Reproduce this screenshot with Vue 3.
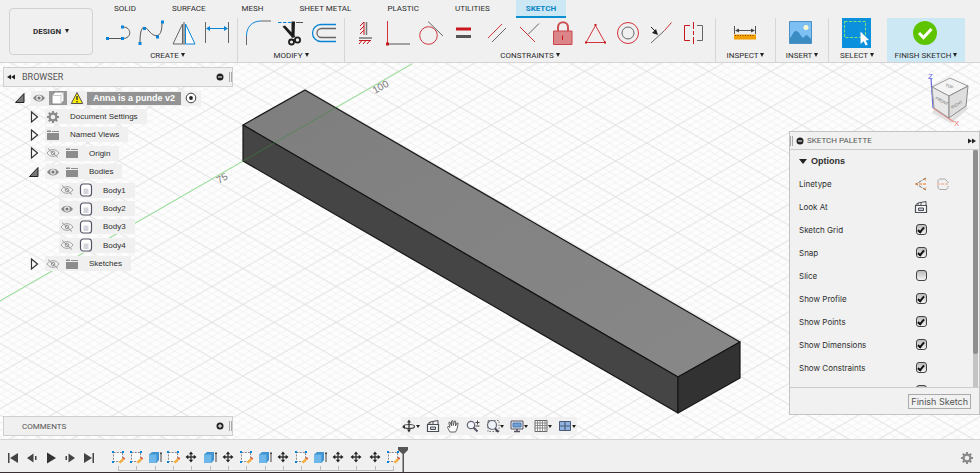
<script setup>
import { ref } from 'vue'

const tabs = ['SOLID', 'SURFACE', 'MESH', 'SHEET METAL', 'PLASTIC', 'UTILITIES', 'SKETCH']
const activeTab = ref('SKETCH')

const groups = [
  { label: 'CREATE', tools: ['line', 'spline', 'mirror', 'dimension'] },
  { label: 'MODIFY', tools: ['fillet', 'trim', 'offset'] },
  {
    label: 'CONSTRAINTS',
    tools: ['horizontal', 'coincident', 'tangent', 'equal', 'parallel', 'perpendicular', 'fix', 'midpoint', 'concentric', 'collinear', 'symmetry'],
  },
  { label: 'INSPECT', tools: ['inspect'] },
  { label: 'INSERT', tools: ['insert'] },
  { label: 'SELECT', tools: ['select'] },
]

const tree = [
  { label: 'Document Settings', icons: ['gear'], depth: 1, open: false },
  { label: 'Named Views', icons: ['folder'], depth: 1, open: false },
  { label: 'Origin', icons: ['eyeoff', 'folder'], depth: 1, open: false },
  { label: 'Bodies', icons: ['eye', 'folder'], depth: 1, open: true },
  { label: 'Body1', icons: ['eyeoff', 'body'], depth: 2 },
  { label: 'Body2', icons: ['eye', 'body'], depth: 2 },
  { label: 'Body3', icons: ['eyeoff', 'body'], depth: 2 },
  { label: 'Body4', icons: ['eyeoff', 'body'], depth: 2 },
  { label: 'Sketches', icons: ['eyeoff', 'folder'], depth: 1, open: false },
]

const options = ref([
  { label: 'Sketch Grid', on: true },
  { label: 'Snap', on: true },
  { label: 'Slice', on: false },
  { label: 'Show Profile', on: true },
  { label: 'Show Points', on: true },
  { label: 'Show Dimensions', on: true },
  { label: 'Show Constraints', on: true },
])
const projected = ref(true)

const navTools = [
  { name: 'orbit', menu: true },
  { name: 'lookat' },
  { name: 'pan' },
  { name: 'zoom' },
  { name: 'zoomwindow', menu: true },
  { name: 'display', menu: true },
  { name: 'grid', menu: true },
  { name: 'viewports', menu: true },
]

const playback = ['first', 'back', 'play', 'forward', 'last']
const features = ['sketch', 'sketch', 'extrude', 'sketch', 'move', 'extrude', 'move', 'sketch', 'extrude', 'move', 'sketch', 'extrude', 'move', 'move', 'move', 'sketch']
</script>

<template>
  <div class="app">
    <svg class="defs" aria-hidden="true">
      <!-- Sketch tools, 30 x 30 -->
      <symbol id="t-line" viewBox="0 0 30 30">
        <path d="M4 20.500H20C29 20.500 29 9 20 9" fill="none" stroke="#555" stroke-width="1" />
        <path d="M3 19h3v3H3zM18 19h3v3h-3zM18 7.500h3v3h-3z" fill="#0a84d6" />
      </symbol>
      <symbol id="t-spline" viewBox="0 0 30 30">
        <path d="M4 25C4 5 9 8 13 13S26 23 26 5" fill="none" stroke="#555" />
        <path d="M2.500 24h3v3h-3zM7 9h3v3H7zM20 17.500h3v3h-3zM25 2.500h3v3h-3z" fill="#0a84d6" />
      </symbol>
      <symbol id="t-mirror" viewBox="0 0 30 30">
        <path d="M13.500 6L4 26h9.500z" fill="none" stroke="#666" />
        <path d="M16.500 6L26 26h-9.500z" fill="#fff" stroke="#0a84d6" />
        <path d="M15 4v23" stroke="#555" />
      </symbol>
      <symbol id="t-dimension" viewBox="0 0 30 30">
        <path d="M3.500 4v21M26.500 4v21" stroke="#666" />
        <path d="M5 10.500h20" stroke="#0a84d6" />
        <path d="M4 10.500l4-2.500v5zM26 10.500L22 8v5z" fill="#0a84d6" />
      </symbol>
      <symbol id="t-fillet" viewBox="0 0 30 30">
        <path d="M3.500 18C3.500 9 9 3 18 3" fill="none" stroke="#0a84d6" />
        <path d="M3.500 18v9M18 3h10" stroke="#666" />
      </symbol>
      <symbol id="t-trim" viewBox="0 0 30 30">
        <path d="M2 4.500h13" stroke="#0a84d6" stroke-dasharray="3.500 1.500" />
        <path d="M20 4.500h7" stroke="#555" />
        <path d="M6.500 8.500L9 7.500 19.500 18.500 16.500 20zM15.500 3.500h3.500l-.5 16h-3z" fill="#1c1c1c" />
        <circle cx="15.500" cy="24" r="2.500" fill="none" stroke="#1c1c1c" stroke-width="1.800" />
        <circle cx="21.500" cy="22" r="2.600" fill="none" stroke="#1c1c1c" stroke-width="1.800" />
      </symbol>
      <symbol id="t-offset" viewBox="0 0 30 30">
        <path d="M27 6.500H12A8.500 8.500 0 0 0 12 23.500H27" fill="none" stroke="#0a84d6" stroke-width="1.300" />
        <path d="M27 10.500H12.500A4.500 4.500 0 0 0 12.500 19.500H27" fill="none" stroke="#666" stroke-width="1.300" />
      </symbol>
      <symbol id="t-horizontal" viewBox="0 0 30 30">
        <path d="M16.500 4v13M9 20h13" stroke="#777" stroke-width="1.500" />
        <path d="M14 4v13M10 8l4-4M10 12l4-4M10 16l4-4M9 22.500h12M9 26l3-3.500M13 26l3-3.500M17 26l3-3.500" stroke="#c8181e" fill="none" />
      </symbol>
      <symbol id="t-coincident" viewBox="0 0 30 30">
        <path d="M4.500 3v23" stroke="#d0353a" />
        <path d="M5 26h22" stroke="#777" stroke-width="1.300" />
        <path d="M3 24.500h3v3H3z" fill="#c8181e" />
      </symbol>
      <symbol id="t-tangent" viewBox="0 0 30 30">
        <circle cx="12.500" cy="17.500" r="8.800" fill="none" stroke="#d0353a" />
        <path d="M12 3.500L27 18" stroke="#666" />
      </symbol>
      <symbol id="t-equal" viewBox="0 0 30 30">
        <path d="M7 9.500h15v3H7z" fill="#c8181e" />
        <path d="M7 17h15v3H7z" fill="#555" />
      </symbol>
      <symbol id="t-parallel" viewBox="0 0 30 30">
        <path d="M6 20L20 6" stroke="#d0353a" />
        <path d="M10 24L24 10" stroke="#666" />
      </symbol>
      <symbol id="t-perpendicular" viewBox="0 0 30 30">
        <path d="M5 9l15 15" stroke="#d0353a" />
        <path d="M13 16.500L24 5.500" stroke="#666" />
      </symbol>
      <symbol id="t-fix" viewBox="0 0 30 30">
        <path d="M10 13V9.500C10 2.500 20 2.500 20 9.500V13" fill="none" stroke="#cc5055" stroke-width="2" />
        <path d="M5.500 13h18.500v13.500H5.500z" fill="#dc8588" stroke="#c9474c" />
        <path d="M14.500 17.500v4.500" stroke="#c8181e" />
      </symbol>
      <symbol id="t-midpoint" viewBox="0 0 30 30">
        <path d="M14.500 7.500l9.500 17H5z" fill="none" stroke="#d0353a" />
        <path d="M13.500 6h2v2h-2zM4 23.500h2v2H4zM23 23.500h2v2h-2z" fill="#c8181e" />
      </symbol>
      <symbol id="t-concentric" viewBox="0 0 30 30">
        <circle cx="14" cy="15" r="10.500" fill="none" stroke="#d0353a" />
        <circle cx="14" cy="15" r="6" fill="none" stroke="#666" />
      </symbol>
      <symbol id="t-collinear" viewBox="0 0 30 30">
        <path d="M4 25l13.500-12.500" stroke="#666" />
        <path d="M17.500 12.500l7-8" stroke="#d0353a" />
        <path d="M4 9l4 4" stroke="#222" />
        <path d="M11 17l-6-2 4-4z" fill="#222" />
      </symbol>
      <symbol id="t-symmetry" viewBox="0 0 30 30">
        <path d="M10 7.500H4.500v15H10" fill="none" stroke="#c8181e" />
        <path d="M13.500 4v7M13.500 13v4M13.500 19v7" stroke="#c8181e" />
        <path d="M17 7.500h5.500v15H17" fill="none" stroke="#666" />
      </symbol>
      <symbol id="t-inspect" viewBox="0 0 30 30">
        <path d="M3.500 8v8M24.500 8v8M5 12.500h18" stroke="#555" />
        <path d="M4 12.500l4-2v4zM24 12.500l-4-2v4z" fill="#444" />
        <path d="M3 16.500h22v5H3z" fill="#f5a000" />
        <path d="M4 17.500h20" stroke="#6b4a00" stroke-dasharray="1 1.500" />
      </symbol>
      <symbol id="t-insert" viewBox="0 0 30 30">
        <path d="M2.500 3.500h22v22h-22z" fill="#7cc0f4" stroke="#4a90c4" />
        <circle cx="19" cy="9.500" r="2.500" fill="#fffbd0" />
        <path d="M3 20c3-3 3-7 6-7s4 4 7 7c2-3 4-4 6-1l2 2v4H3z" fill="#3c8cc4" />
      </symbol>
      <symbol id="t-select" viewBox="0 0 30 30">
        <path d="M0 0h29v30H0z" fill="#0a90dc" />
        <path d="M2.500 3.500h21v16h-21z" fill="none" stroke="#7fe07f" stroke-dasharray="3 1.500" />
        <path d="M18.500 13.500l8.500 8.500-3.400.4 2.200 4.200-2.200 1-2-4.300-3 2.700z" fill="#fff" />
      </symbol>
      <symbol id="t-finish" viewBox="0 0 30 30">
        <circle cx="14" cy="15" r="12" fill="#5fc400" />
        <path d="M8 15l4.500 4.500L20.500 11" fill="none" stroke="#fff" stroke-width="3" />
      </symbol>

      <!-- Tree icons, 14 x 14 -->
      <symbol id="i-eye" viewBox="0 0 14 14">
        <path d="M1 7C4 2.500 10 2.500 13 7C10 11.500 4 11.500 1 7z" fill="#888" />
        <circle cx="7" cy="7" r="2.800" fill="#eee" />
        <circle cx="7" cy="7" r="1.600" fill="#777" />
      </symbol>
      <symbol id="i-eyeoff" viewBox="0 0 14 14">
        <path d="M1 7C4 2.500 10 2.500 13 7C10 11.500 4 11.500 1 7z" fill="none" stroke="#999" stroke-width=".9" />
        <circle cx="7" cy="7" r="1.800" fill="none" stroke="#999" />
        <path d="M2 2.500l10 9" stroke="#999" />
      </symbol>
      <symbol id="i-folder" viewBox="0 0 14 14">
        <path d="M1 5h12v7H1zM1 4V2.500h4V4zM6 4V3h7v1z" fill="#8c8c8c" />
      </symbol>
      <symbol id="i-gear" viewBox="0 0 14 14">
        <circle cx="7" cy="7" r="3.400" fill="none" stroke="#8a8a8a" stroke-width="2.200" />
        <path d="M7 1v2.500M7 10.500V13M1 7h2.500M10.500 7H13M2.800 2.800l1.700 1.700M9.500 9.500l1.700 1.700M11.200 2.800L9.500 4.500M4.500 9.500l-1.700 1.700" stroke="#8a8a8a" stroke-width="2" />
      </symbol>
      <symbol id="i-body" viewBox="0 0 14 14">
        <rect x="1.500" y="1" width="11" height="12" rx="2.800" fill="#fff" stroke="#556" stroke-width="1.200" />
        <path d="M4.500 5.500h5V11h-5z" fill="#d4d4dc" />
      </symbol>
      <symbol id="i-cube" viewBox="0 0 14 14">
        <path d="M1 4.500L4 1h9v8.500L10 13H1z" fill="#fff" stroke="#888" />
        <path d="M1.500 4.500H10V13M10 4.500L13 1" fill="none" stroke="#bbb" stroke-width=".8" />
      </symbol>
      <symbol id="i-warning" viewBox="0 0 14 14">
        <path d="M7 1.500l5.700 11H1.300z" fill="#ffee00" stroke="#555" stroke-linejoin="round" />
        <path d="M7 5v4M7 10v1.500" stroke="#333" stroke-width="1.400" />
      </symbol>
      <symbol id="i-closed" viewBox="0 0 14 14">
        <path d="M4.500 2l6 5-6 5z" fill="#fff" stroke="#333" stroke-width="1.200" />
      </symbol>
      <symbol id="i-open" viewBox="0 0 14 14">
        <path d="M11 2.500v9H2.500z" fill="#777" stroke="#222" />
      </symbol>
      <symbol id="i-target" viewBox="0 0 14 14">
        <circle cx="7" cy="7" r="4.800" fill="#fff" stroke="#444" />
        <circle cx="7" cy="7" r="1.900" fill="#222" />
      </symbol>
      <symbol id="i-minus" viewBox="0 0 14 14">
        <circle cx="7" cy="7" r="3.500" fill="#222" />
        <path d="M5 7h4" stroke="#fff" />
      </symbol>
      <symbol id="i-plus" viewBox="0 0 14 14">
        <circle cx="7" cy="7" r="3.500" fill="#222" />
        <path d="M5 7h4M7 5v4" stroke="#fff" />
      </symbol>
      <symbol id="i-rewind" viewBox="0 0 14 14">
        <path d="M7 4.500v5L3 7zM11 4.500v5L7 7z" fill="#222" />
      </symbol>
      <symbol id="i-fast" viewBox="0 0 14 14">
        <path d="M3 4.500v5L7 7zM7 4.500v5L11 7z" fill="#222" />
      </symbol>

      <!-- Palette and navigation icons, 14 x 14 -->
      <symbol id="i-construction" viewBox="0 0 14 14">
        <path d="M12 1L2 7l10 6" fill="none" stroke="#777" stroke-dasharray="4 1" />
        <path d="M1 7h12M10 1l2 3M10 13l2-3" stroke="#f07020" stroke-dasharray="3 1" />
      </symbol>
      <symbol id="i-centerline" viewBox="0 0 14 14">
        <path d="M2 6V3.500L3.500 2H9l3 3v1M12 9v1.500L10.500 12.500H3.500L2 11V8" fill="none" stroke="#aaa" />
        <path d="M1 7h12" stroke="#f0a080" stroke-dasharray="3 1" />
      </symbol>
      <symbol id="n-lookat" viewBox="0 0 14 14">
        <path d="M1.500 5.500h11v7h-11z" fill="#f8f8f8" stroke="#4a4f55" stroke-width="1.200" />
        <path d="M1.500 5L4 3l8-1.500V5M4 3v2M7 2.500V5" fill="none" stroke="#4a4f55" />
        <path d="M4.500 8h5v2.500h-5z" fill="#ccd" stroke="#4a4f55" />
      </symbol>
      <symbol id="n-orbit" viewBox="0 0 14 14">
        <ellipse cx="7" cy="7.500" rx="5.500" ry="2" fill="none" stroke="#444" stroke-width="1.200" />
        <path d="M7 2v10" stroke="#333" stroke-width="1.300" />
        <path d="M7 .5l2 3H5zM7 13.500l2-3H5zM0 8l3-2v4z" fill="#333" />
      </symbol>
      <symbol id="n-pan" viewBox="0 0 14 14">
        <path d="M4 13L1.500 8.500 2 7.300 4 8.500 2.800 3.500 4 3l1.500 4V2l1.300-.5.5 5L8.500 2l1.200.2L9.500 7l1.500-3 1.200.3L11 10l-1.500 3z" fill="#fff" stroke="#555" stroke-width=".9" />
      </symbol>
      <symbol id="n-zoom" viewBox="0 0 14 14">
        <circle cx="5" cy="6" r="3.700" fill="#f4f7fa" stroke="#667" stroke-width="1.200" />
        <path d="M7.500 8.500l4 4" stroke="#556" stroke-width="2" />
        <path d="M9.500 3.500h4M11.500 1.500v4M9.500 7h4" stroke="#444" />
      </symbol>
      <symbol id="n-zoomwindow" viewBox="0 0 14 14">
        <path d="M2 1.500h11v11H2z" fill="none" stroke="#777" stroke-dasharray="1.500 1.500" />
        <circle cx="6" cy="6" r="4.500" fill="#eef3f7" stroke="#667" stroke-width="1.200" />
        <path d="M9 9.500l3.500 3.500" stroke="#445" stroke-width="2" />
      </symbol>
      <symbol id="n-display" viewBox="0 0 14 14">
        <path d="M1 2h12v8H1z" fill="#e4e8ee" stroke="#556" />
        <path d="M3 4h8v4H3z" fill="#6fa0d8" stroke="#4a78b0" />
        <path d="M4 12.500h6M7 10v2" stroke="#556" stroke-width="1.500" />
      </symbol>
      <symbol id="n-grid" viewBox="0 0 14 14">
        <path d="M1 1.500h12v11H1z" fill="#fff" stroke="#666" />
        <path d="M1 4h12M1 6.500h12M1 9h12M3.500 1v12M6 1v12M8.500 1v12M11 1v12" stroke="#777" stroke-width=".8" />
      </symbol>
      <symbol id="n-viewports" viewBox="0 0 14 14">
        <path d="M1.500 2.500h11v9h-11z" fill="#8fb4e0" stroke="#4a5a78" />
        <path d="M7 2v10M1 7h12" stroke="#4a5a78" stroke-width="1.200" />
      </symbol>

      <!-- Timeline icons, 14 x 14 -->
      <symbol id="p-first" viewBox="0 0 14 14"><path d="M2 2h1.500v10H2zM12 2v10L4 7z" fill="#444" /></symbol>
      <symbol id="p-back" viewBox="0 0 14 14"><path d="M8.500 2.500v9L2 7zM10 5h1.500v4H10z" fill="#444" /></symbol>
      <symbol id="p-play" viewBox="0 0 14 14"><path d="M3 1.500L12 7l-9 5.500z" fill="#333" /></symbol>
      <symbol id="p-forward" viewBox="0 0 14 14"><path d="M5.500 2.500v9L12 7zM2.500 5H4v4H2.500z" fill="#444" /></symbol>
      <symbol id="p-last" viewBox="0 0 14 14"><path d="M10.500 2H12v10h-1.500zM2 2v10l8-5z" fill="#444" /></symbol>
      <symbol id="f-sketch" viewBox="0 0 14 14">
        <path d="M2.500 2.500h9v9h-9z" fill="#fafafa" stroke="#888" stroke-dasharray="2 1.200" />
        <path d="M1 1h2v2H1zM11 1h2v2h-2zM1 11h2v2H1z" fill="#0a84d6" />
        <path d="M7.500 12l4-4 2 1.500-4 4z" fill="#f5b041" />
        <path d="M11.500 8l1-1 1.700 1.500-.9 1z" fill="#e04030" />
      </symbol>
      <symbol id="f-extrude" viewBox="0 0 14 14">
        <path d="M1 4.500L4 2h7v8l-2.500 3H1z" fill="#3f93d0" />
        <path d="M1 4.500h7.500V13H1z" fill="#6db6ea" />
        <path d="M13 2v10M12 3.500h2" stroke="#444" />
      </symbol>
      <symbol id="f-move" viewBox="0 0 14 14">
        <path d="M7 3v8M3 7h8" stroke="#333" stroke-width="1.300" />
        <path d="M7 1.500l2.200 2.800H4.800zM7 12.500l2.200-2.800H4.800zM1.500 7l2.800-2.200v4.400zM12.500 7L9.700 4.800v4.400z" fill="#222" />
      </symbol>
    </svg>

    <header class="toolbar">
      <button class="workspace">DESIGN <i class="caret"></i></button>
      <div class="ribbon">
        <nav class="tabs">
          <button v-for="t in tabs" :key="t" class="tab" :class="{ active: t === activeTab }" @click="activeTab = t">{{ t }}</button>
        </nav>
        <div class="groups">
          <section v-for="g in groups" :key="g.label" class="group" :class="'g-' + g.label.toLowerCase()">
            <div class="tools">
              <button v-for="t in g.tools" :key="t" class="tool" :aria-label="t">
                <svg><use :href="'#t-' + t" /></svg>
              </button>
            </div>
            <button class="group-label">{{ g.label }} <i class="caret"></i></button>
          </section>
          <section class="group finish">
            <div class="tools">
              <button class="tool" aria-label="finish"><svg><use href="#t-finish" /></svg></button>
            </div>
            <button class="group-label">FINISH SKETCH <i class="caret"></i></button>
          </section>
        </div>
      </div>
    </header>

    <main class="viewport">
      <svg class="scene" aria-label="Model view">
        <defs>
          <pattern id="minor" width="12.420" height="7.170" patternUnits="userSpaceOnUse" x="243" y="98">
            <path d="M0 0L12.420 7.170M12.420 0L0 7.170" stroke="#efeff0" stroke-width=".8" />
          </pattern>
          <pattern id="major" width="62.100" height="35.850" patternUnits="userSpaceOnUse" x="243" y="98">
            <path d="M0 0L62.100 35.850M62.100 0L0 35.850" stroke="#e1e1e3" stroke-width=".9" />
          </pattern>
          <linearGradient id="top" x1="0" y1="0" x2="1" y2="1">
            <stop offset="0" stop-color="#7e7e7e" />
            <stop offset="1" stop-color="#888" />
          </linearGradient>
        </defs>
        <rect width="100%" height="100%" fill="url(#minor)" />
        <rect width="100%" height="100%" fill="url(#major)" />
        <path d="M-2 239L412 1" stroke="#8ee08e" />
        <text class="axis" transform="translate(375 31) rotate(-30)">100</text>
        <text class="axis" transform="translate(219 121) rotate(-30)">75</text>
        <g stroke="#161616" stroke-width="1.200" stroke-linejoin="round">
          <path d="M243 62L305 27 740 279 678 314z" fill="url(#top)" />
          <path d="M243 62L678 314V350L243 98z" fill="#454545" />
          <path d="M678 314L740 279V315L678 350z" fill="#323232" />
        </g>
        <path d="M243 98L337 44" stroke="#3f8a3f" stroke-width=".8" opacity=".7" />
      </svg>

      <svg class="viewcube" viewBox="0 0 48 62" aria-label="View cube">
        <path d="M10 46L28 56L44 42" fill="none" stroke="#e0e0e0" stroke-width="4" />
        <path d="M8 13L10 43" stroke="#6666dd" stroke-width="1.200" />
        <path d="M10 43L31 57" stroke="#ee8888" stroke-width="1.200" />
        <path d="M9 22L27 13 45 21 26 31z" fill="#f4f4f4" stroke="#999" />
        <path d="M9 22L26 31V53L11 43z" fill="#e8e8e8" stroke="#999" />
        <path d="M45 21L26 31V53L43 41z" fill="#dedede" stroke="#888" />
        <text class="face" transform="translate(22 21) rotate(20)">TOP</text>
        <text class="face" transform="translate(12 34) rotate(28)">FRONT</text>
        <text class="face" transform="translate(29 44) rotate(-30)">RIGHT</text>
        <text class="axis-z" x="5" y="14">Z</text>
        <text class="axis-x" x="31" y="61">X</text>
      </svg>

      <aside class="browser">
        <div class="bar">
          <svg class="ico"><use href="#i-rewind" /></svg>
          <h2 class="wide">BROWSER</h2>
          <button class="icon-btn" aria-label="Collapse"><svg class="ico"><use href="#i-minus" /></svg></button>
          <i class="grip"></i>
        </div>
        <ul class="tree">
          <li class="row root">
            <svg class="ico"><use href="#i-open" /></svg>
            <div class="node">
              <svg class="ico"><use href="#i-eye" /></svg>
              <span class="cube"><svg class="ico"><use href="#i-cube" /></svg></span>
              <svg class="ico"><use href="#i-warning" /></svg>
              <strong class="doc">Anna is a punde v2</strong>
              <svg class="ico"><use href="#i-target" /></svg>
            </div>
          </li>
          <li v-for="n in tree" :key="n.label" class="row" :class="'depth' + n.depth">
            <svg v-if="n.depth === 1" class="ico"><use :href="n.open ? '#i-open' : '#i-closed'" /></svg>
            <div class="node">
              <svg v-for="i in n.icons" :key="i" class="ico"><use :href="'#i-' + i" /></svg>
              <span class="name">{{ n.label }}</span>
            </div>
          </li>
        </ul>
      </aside>

      <aside class="comments bar">
        <h2>COMMENTS</h2>
        <button class="icon-btn" aria-label="Add comment"><svg class="ico"><use href="#i-plus" /></svg></button>
        <i class="grip"></i>
      </aside>

      <aside class="palette">
        <div class="palette-head">
          <i class="grip"></i>
          <svg class="ico"><use href="#i-minus" /></svg>
          <h2>SKETCH PALETTE</h2>
          <svg class="ico"><use href="#i-fast" /></svg>
        </div>
        <div class="palette-body">
          <div class="fields">
            <h3><i class="caret big"></i>Options</h3>
            <div class="field">
              <span>Linetype</span>
              <button class="icon-btn" aria-label="Construction"><svg class="ico"><use href="#i-construction" /></svg></button>
              <button class="icon-btn" aria-label="Centerline"><svg class="ico"><use href="#i-centerline" /></svg></button>
            </div>
            <div class="field">
              <span>Look At</span>
              <button class="icon-btn" aria-label="Look At"><svg class="ico"><use href="#n-lookat" /></svg></button>
            </div>
            <label v-for="o in options" :key="o.label" class="field">
              <span>{{ o.label }}</span>
              <input v-model="o.on" type="checkbox" />
            </label>
            <div class="field">
              <span></span>
              <input v-model="projected" type="checkbox" aria-label="Show Projected Geometries" />
            </div>
          </div>
          <div class="track"><div class="thumb"></div></div>
        </div>
        <div class="palette-foot"><button class="done">Finish Sketch</button></div>
      </aside>

      <nav class="navbar">
        <button v-for="n in navTools" :key="n.name" class="nav-btn" :aria-label="n.name">
          <svg class="ico"><use :href="'#n-' + n.name" /></svg>
          <i v-if="n.menu" class="caret"></i>
        </button>
      </nav>
    </main>

    <footer class="timeline">
      <div class="playback">
        <button v-for="p in playback" :key="p" class="icon-btn" :aria-label="p"><svg class="ico"><use :href="'#p-' + p" /></svg></button>
      </div>
      <ol class="features">
        <li v-for="(f, i) in features" :key="i"><svg class="ico"><use :href="'#f-' + f" /></svg></li>
      </ol>
      <svg class="marker" viewBox="0 0 12 26"><path d="M1 1h10v3L7 8v18H5.500V8L1 4z" fill="#555" /></svg>
      <button class="icon-btn settings" aria-label="Settings"><svg class="ico"><use href="#i-gear" /></svg></button>
    </footer>
  </div>
</template>

<style>
body {
  margin: 0;
}
</style>

<style scoped>
.app {
  display: flex;
  flex-direction: column;
  height: 100vh;
  min-height: 440px;
  box-sizing: border-box;
  border-bottom: 1px solid #3a3032;
  background: #fdfdfd;
  color: #2e2e2e;
  font: 8px "Liberation Sans", Arial, sans-serif;
  overflow: hidden;
}
.defs {
  display: none;
}
button {
  margin: 0;
  padding: 0;
  border: 0;
  background: none;
  color: inherit;
  font: inherit;
}
h2,
h3,
ul,
ol {
  margin: 0;
  padding: 0;
  list-style: none;
}
.ico {
  display: block;
  flex: none;
  width: 14px;
  height: 14px;
}
.caret {
  display: inline-block;
  border: 2px solid transparent;
  border-top: 4px solid #222;
  border-bottom: 0;
  vertical-align: 1px;
}
.grip {
  width: 1px;
  height: 10px;
  border: 1px solid #aaa;
  border-width: 0 1px;
}

/* Toolbar */
.toolbar {
  display: flex;
  flex: none;
  height: 63px;
  box-sizing: border-box;
  border-bottom: 1px solid #d4d4d4;
  background: #f0f0f0;
  font-family: Roboto, sans-serif;
}
.workspace {
  width: 84px;
  height: 47px;
  margin: 8px 5px 0 9px;
  box-sizing: border-box;
  border: 1px solid #d2d2d2;
  border-radius: 4px;
  font-weight: 700;
  flex: none;
}
.workspace .caret {
  margin-left: 2px;
}
.ribbon {
  flex: 1;
}
.tabs {
  display: flex;
  gap: 16px;
  height: 18px;
  padding-left: 6px;
}
.tab {
  padding: 0 10px;
  border-bottom: 2px solid transparent;
  white-space: nowrap;
}
.tab.active {
  border-color: #0a90d0;
  background: #cde8f5;
  color: #0a84c4;
  font-weight: 700;
}
.groups {
  display: flex;
  height: 44px;
}
.group {
  display: flex;
  flex-direction: column;
  align-items: center;
  box-sizing: border-box;
  padding: 0 5px;
  border-right: 1px solid #d6d6d6;
}
.tools {
  display: flex;
  gap: 3px;
}
.tool,
.tool svg {
  display: block;
  width: 30px;
  height: 30px;
}
.group-label {
  height: 14px;
  white-space: nowrap;
}
.g-inspect {
  width: 60px;
}
.g-insert {
  width: 53px;
}
.g-select {
  width: 56px;
  border: 0;
}
.finish {
  width: 78px;
  margin-left: 2px;
  border: 0;
  background: #cde8f5;
}

/* Viewport */
.viewport {
  position: relative;
  flex: 1;
  overflow: hidden;
}
.scene {
  position: absolute;
  inset: 0;
  width: 100%;
  height: 100%;
}
.axis {
  fill: #777;
  font-size: 10px;
}
.viewcube {
  position: absolute;
  top: 2px;
  right: 9px;
  width: 48px;
  height: 62px;
}
.face {
  fill: #666;
  font-size: 4px;
}
.axis-z {
  fill: #6666dd;
  font-size: 8px;
}
.axis-x {
  fill: #ee7777;
  font-size: 8px;
}

.bar {
  display: flex;
  align-items: center;
  width: 230px;
  height: 20px;
  box-sizing: border-box;
  border: 1px solid #cfcfcf;
  background: #f0f0f0;
}
h2 {
  flex: 1;
  color: #555;
  font: 8px Roboto, sans-serif;
}
h2.wide {
  font-size: 9px;
}
.browser {
  position: absolute;
  top: 4px;
  left: 3px;
}
.browser h2 {
  margin-left: 4px;
}
.comments {
  position: absolute;
  bottom: 3px;
  left: 3px;
  padding-left: 18px;
}
.bar .icon-btn {
  margin-right: 2px;
}
.tree {
  display: grid;
  grid-auto-rows: 1fr;
  height: 184px;
  padding-top: 2px;
}
.row {
  display: flex;
  align-items: center;
  gap: 4px;
  padding-left: 24px;
}
.root {
  padding-left: 10px;
}
.depth2 {
  padding-left: 56px;
}
.node {
  display: flex;
  align-items: center;
  gap: 5px;
  height: 15px;
  padding: 0 9px 0 1px;
  background: #f0f0f0;
}
.name {
  margin-left: 5px;
  white-space: nowrap;
}
.root .node {
  gap: 3px;
  padding: 0 3px 0 1px;
}
.cube {
  padding: 0 2px;
  background: #999;
}
.doc {
  padding: 0 6px;
  background: #939393;
  color: #fff;
  font-size: 9px;
  line-height: 13px;
}

/* Sketch palette */
.palette {
  position: absolute;
  top: 68px;
  right: 0;
  width: 191px;
  box-sizing: border-box;
  border: 1px solid #c4c4c4;
  background: #f1f1f1;
}
.palette-head {
  display: flex;
  align-items: center;
  height: 17px;
  border-bottom: 1px solid #ccc;
}
.palette-body {
  display: flex;
  height: 237px;
  overflow: hidden;
}
.fields {
  flex: 1;
  padding-left: 9px;
  font-family: Inter, sans-serif;
}
h3 {
  display: flex;
  align-items: center;
  gap: 4px;
  height: 22px;
  font: 700 9px "Liberation Sans", Arial, sans-serif;
}
.caret.big {
  border-width: 5px 4px 0;
}
.field {
  display: grid;
  grid-template-columns: 1fr 14px 14px;
  column-gap: 8px;
  align-items: center;
  justify-items: center;
  height: 23px;
  padding-right: 23px;
}
.field span {
  justify-self: start;
}
input[type="checkbox"] {
  appearance: none;
  display: grid;
  place-content: center;
  width: 11px;
  height: 11px;
  margin: 0;
  box-sizing: border-box;
  border: 1px solid #444;
  border-radius: 3px;
  background: linear-gradient(#bcbcbc, #f4f4f4);
}
input[type="checkbox"]:checked::after {
  content: "";
  width: 2px;
  height: 5px;
  border: solid #111;
  border-width: 0 2px 2px 0;
  transform: rotate(40deg);
}
.track {
  width: 5px;
  margin-right: 1px;
  background: #c4c4c4;
}
.thumb {
  width: 5px;
  height: 204px;
  border-radius: 2px;
  background: #8e8e8e;
}
.palette-foot {
  display: flex;
  justify-content: flex-end;
  align-items: center;
  height: 26px;
  padding-right: 8px;
  border-top: 1px solid #ccc;
}
.done {
  padding: 0 2px;
  border: 1px solid #aaa;
  color: #555;
  font: 9px/13px Inter, sans-serif;
}

/* Navigation bar */
.navbar {
  position: absolute;
  bottom: 4px;
  left: 401px;
  display: flex;
  align-items: center;
  gap: 6px;
  height: 18px;
  padding: 0 1px;
  background: #f1f1f1;
}
.nav-btn {
  display: flex;
  align-items: center;
}
.navbar .caret {
  border-width: 3px 2px 0;
}

/* Timeline */
.timeline {
  display: flex;
  align-items: center;
  flex: none;
  height: 33px;
  box-sizing: border-box;
  border-top: 1px solid #d4d4d4;
  background: #f0f0f0;
}
.playback {
  display: flex;
  gap: 5px;
  padding: 3px 13px 0 6px;
}
.features {
  display: grid;
  grid-template-columns: repeat(16, 1fr);
  align-self: stretch;
  width: 293px;
}
.features li {
  position: relative;
  display: flex;
  justify-content: center;
  padding-top: 10px;
}
.features li::before {
  content: "";
  position: absolute;
  bottom: 1px;
  left: 50%;
  width: 100%;
  height: 4px;
  border: solid #bbb;
  border-width: 0 0 1px 1px;
}
.features li:last-child::before {
  width: 0;
}
.marker {
  align-self: flex-end;
  width: 12px;
  height: 26px;
  margin-left: -5px;
}
.settings {
  padding-top: 3px;
  margin: 0 6px 0 auto;
}
</style>
